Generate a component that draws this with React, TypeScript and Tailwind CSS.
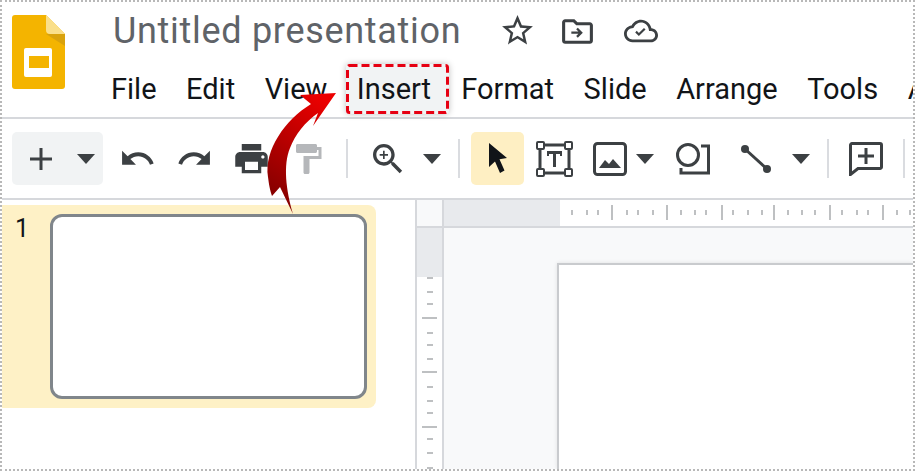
const topTicks = [12, 27, 38, 52, 67, 78, 93, 107, 121, 135, 146, 162, 173, 188, 202, 214, 228, 242, 255, 270, 282, 297, 308, 323, 337, 350];
const topLong = [52, 107, 162, 214, 270, 323];
const sideTicks = [50, 64, 76, 90, 105, 117, 131, 144, 159, 173, 185, 199, 211, 225, 240];
const sideLong = [90, 144, 199];

function Caret() {
  return (
    <svg width="18" height="10" viewBox="0 0 18 10" className="shrink-0">
      <path d="M0 0h18L9 10z" fill="#3c4043" />
    </svg>
  );
}

function Sep({ className }: { className: string }) {
  return <div className={`w-[2px] h-[39px] bg-[#dadce0] shrink-0 ${className}`} />;
}

function Logo() {
  return (
    <svg width="53" height="74" viewBox="0 0 53 74" className="shrink-0">
      <path d="M3 0h31l19 19v52a3 3 0 0 1-3 3H3a3 3 0 0 1-3-3V3a3 3 0 0 1 3-3z" fill="#f4b400" />
      <path d="M34 19l19 12V19z" fill="#d9a20c" />
      <path d="M34 0l19 19H38a4 4 0 0 1-4-4z" fill="#fadf8a" />
      <rect x="12" y="33" width="28" height="29" rx="2" fill="#fff" />
      <rect x="17" y="41" width="20" height="12" fill="#f4b400" />
    </svg>
  );
}

export default function App() {
  const menu = ['File', 'Edit', 'View'];
  const menu2 = ['Format', 'Slide', 'Arrange', 'Tools', 'Add-ons'];
  return (
    <div className="relative w-[915px] h-[471px] overflow-hidden bg-white border-2 border-dotted border-[#b8b8b8] flex flex-col font-['Roboto',sans-serif]">
      <header className="h-[117px] shrink-0 flex pl-[10px] border-b-2 border-[#d6d8dc]">
        <div className="pt-[13px]">
          <Logo />
        </div>
        <div className="ml-[48px] pt-[9px] min-w-0 flex-1">
          <div className="flex items-center h-[40px]">
            <span className="w-[386px] shrink-0 text-[36px] leading-[40px] text-[#5f6368] tracking-[0.7px] whitespace-nowrap">
              Untitled presentation
            </span>
            <svg width="37" height="37" viewBox="0 0 24 24" fill="#3c4043" className="shrink-0 -mt-[2px]">
              <path d="M22 9.24l-7.19-.62L12 2 9.19 8.63 2 9.24l5.46 4.73L5.82 21 12 17.27 18.18 21l-1.63-7.03L22 9.24zM12 15.4l-3.76 2.27 1-4.28-3.32-2.88 4.38-.38L12 6.1l1.71 4.04 4.38.38-3.32 2.88 1 4.28L12 15.4z" />
            </svg>
            <svg width="37" height="37" viewBox="0 0 24 24" fill="#3c4043" className="shrink-0 ml-[23px]">
              <path d="M20 6h-8l-2-2H4c-1.1 0-2 .9-2 2v12c0 1.1.9 2 2 2h16c1.1 0 2-.9 2-2V8c0-1.1-.9-2-2-2zm0 12H4V6h5.17l2 2H20v10z" />
              <path d="M12.2 9.5l-1.06 1.06 1.44 1.44H8v1.5h4.58l-1.44 1.44L12.2 16l3.25-3.25z" />
            </svg>
            <svg width="34" height="34" viewBox="0 0 24 24" fill="#3c4043" className="shrink-0 ml-[28px]">
              <path d="M19.35 10.04C18.67 6.59 15.64 4 12 4 9.11 4 6.6 5.64 5.35 8.04 2.34 8.36 0 10.91 0 14c0 3.31 2.69 6 6 6h13c2.76 0 5-2.24 5-5 0-2.64-2.05-4.78-4.65-4.96zM19 18H6c-2.21 0-4-1.79-4-4 0-2.05 1.53-3.76 3.56-3.97l1.07-.11.5-.95C8.08 7.14 9.94 6 12 6c2.62 0 4.88 1.86 5.39 4.43l.3 1.5 1.53.11c1.56.1 2.78 1.41 2.78 2.96 0 1.65-1.35 3-3 3z" />
              <path d="M10.5 15.6l-2.6-2.6 1.1-1.1 1.5 1.5 3.6-3.6 1.1 1.1z" />
            </svg>
          </div>
          <nav className="mt-[13px] h-[50px] flex items-center gap-[29.5px] text-[29px] leading-[32px] text-[#111418] whitespace-nowrap -ml-[2px]">
            {menu.map((m) => (
              <span key={m}>{m}</span>
            ))}
            <span className="relative -ml-[11px] -mr-[17px] w-[103px] h-[50px] shrink-0 flex items-center pl-[11px] bg-[#f1f3f4] rounded-[3px] shadow-[0_0_6px_rgba(0,0,0,0.25)]">
              Insert
              <svg width="103" height="50" viewBox="0 0 103 50" fill="none" className="absolute left-0 top-0">
                <rect x="1.5" y="1.5" width="100" height="47" rx="2" stroke="#e60012" strokeWidth="3" strokeDasharray="8 4" />
              </svg>
            </span>
            {menu2.map((m) => (
              <span key={m}>{m}</span>
            ))}
          </nav>
        </div>
      </header>

      <div className="h-[81px] shrink-0 flex items-center pl-[10px] border-b-2 border-[#d6d8dc]">
        <div className="w-[91px] h-[53px] shrink-0 flex items-center rounded-[5px] bg-[#f1f3f4] pl-[18px]">
          <svg width="22" height="22" viewBox="0 0 22 22" fill="#3c4043">
            <path d="M9.5 0h3v9.5H22v3h-9.5V22h-3v-9.5H0v-3h9.5z" />
          </svg>
          <div className="ml-[25px]">
            <Caret />
          </div>
        </div>
        <svg width="37" height="37" viewBox="0 0 24 24" fill="#3c4043" className="shrink-0 ml-[16px]">
          <path d="M12.5 8c-2.65 0-5.05.99-6.9 2.6L2 7v9h9l-3.62-3.62c1.39-1.16 3.16-1.88 5.12-1.88 3.54 0 6.55 2.31 7.6 5.5l2.37-.78C21.08 11.03 17.15 8 12.5 8z" />
        </svg>
        <svg width="37" height="37" viewBox="0 0 24 24" fill="#3c4043" className="shrink-0 ml-[20px]">
          <path d="M18.4 10.6C16.55 8.99 14.15 8 11.5 8c-4.65 0-8.58 3.03-9.96 7.22L3.9 16c1.05-3.19 4.05-5.5 7.6-5.5 1.95 0 3.73.72 5.12 1.88L13 16h9V7l-3.6 3.6z" />
        </svg>
        <svg width="39" height="39" viewBox="0 0 24 24" fill="#3c4043" className="shrink-0 ml-[19px]">
          <path d="M19 8H5c-1.66 0-3 1.34-3 3v6h4v4h12v-4h4v-6c0-1.66-1.34-3-3-3zm-3 11H8v-5h8v5zm3-7c-.55 0-1-.45-1-1s.45-1 1-1 1 .45 1 1-.45 1-1 1zm-1-9H6v4h12V3z" />
        </svg>
        <svg width="36" height="36" viewBox="0 0 24 24" fill="#b5b7ba" className="shrink-0 ml-[19px]">
          <path d="M18 4V3c0-.55-.45-1-1-1H5c-.55 0-1 .45-1 1v4c0 .55.45 1 1 1h12c.55 0 1-.45 1-1V6h1v4H9v11c0 .55.45 1 1 1h2c.55 0 1-.45 1-1v-9h8V4h-3z" />
        </svg>
        <Sep className="ml-[20px]" />
        <svg width="40" height="40" viewBox="0 0 24 24" fill="#3c4043" className="shrink-0 ml-[20px]">
          <path d="M15.5 14h-.79l-.28-.27C15.41 12.59 16 11.11 16 9.5 16 5.91 13.09 3 9.5 3S3 5.91 3 9.5 5.91 16 9.5 16c1.61 0 3.09-.59 4.23-1.57l.27.28v.79l5 4.99L20.49 19l-4.99-5zm-6 0C7.01 14 5 11.99 5 9.5S7.01 5 9.5 5 14 7.01 14 9.5 11.99 14 9.5 14z" />
          <path d="M12 10h-2v2H9v-2H7V9h2V7h1v2h2v1z" />
        </svg>
        <div className="ml-[15px]">
          <Caret />
        </div>
        <Sep className="ml-[17px]" />
        <div className="w-[53px] h-[53px] shrink-0 ml-[11px] rounded-[5px] bg-[#feefc3] flex items-center justify-center">
          <svg width="20" height="31" viewBox="0 0 20 31" fill="#111418">
            <path d="M1 0l18 15-7.5 1.2 5 11.3-4.5 2.5-5-11.5L1 24z" />
          </svg>
        </div>
        <svg width="37" height="36" viewBox="0 0 37 36" className="shrink-0 ml-[12px]">
          <rect x="4" y="4" width="29" height="28" fill="none" stroke="#3c4043" strokeWidth="3" />
          <path d="M11 10h15v5h-2v-2h-4v13h-3V13h-4v2h-2z" fill="#3c4043" />
          {[
            [1, 1],
            [29, 1],
            [1, 28],
            [29, 28],
          ].map(([x, y]) => (
            <rect key={`${x}-${y}`} x={x} y={y} width="7" height="7" rx="1" fill="#fff" stroke="#3c4043" strokeWidth="2" />
          ))}
        </svg>
        <svg width="34" height="34" viewBox="0 0 34 34" className="shrink-0 ml-[20px]">
          <rect x="1.5" y="1.5" width="31" height="31" rx="3" fill="none" stroke="#3c4043" strokeWidth="3" />
          <path d="M6 26l6-8 4 4 4-5 8 9z" fill="#3c4043" />
        </svg>
        <div className="ml-[9px]">
          <Caret />
        </div>
        <svg width="34" height="33" viewBox="0 0 34 33" fill="none" stroke="#3c4043" strokeWidth="3" className="shrink-0 ml-[22px]">
          <circle cx="12" cy="13" r="10.5" />
          <path d="M25 4h7.5v27H5v-5" />
        </svg>
        <svg width="30" height="28" viewBox="0 0 30 28" className="shrink-0 ml-[31px]">
          <path d="M4 4l22 20" stroke="#3c4043" strokeWidth="3" />
          <circle cx="4" cy="4" r="4" fill="#3c4043" />
          <circle cx="26" cy="24" r="4" fill="#3c4043" />
        </svg>
        <div className="ml-[21px]">
          <Caret />
        </div>
        <Sep className="ml-[17px]" />
        <svg width="34" height="34" viewBox="0 0 34 34" className="shrink-0 ml-[20px]">
          <path d="M3 1.5h28a1.5 1.5 0 0 1 1.5 1.5v22a1.5 1.5 0 0 1-1.5 1.5H9l-7.5 6V3A1.5 1.5 0 0 1 3 1.5z" fill="none" stroke="#3c4043" strokeWidth="3" />
          <path d="M15.5 6h3v6.5H25v3h-6.5V22h-3v-6.5H9v-3h6.5z" fill="#3c4043" />
        </svg>
        <Sep className="ml-[20px]" />
      </div>

      <div className="flex-1 min-h-0 flex">
        <aside className="w-[415px] shrink-0 pt-[5px] border-r-2 border-[#d6d8dc]">
          <div className="w-[374px] h-[203px] rounded-r-[8px] bg-[#fef1c6] flex pt-[9px] pl-[13px]">
            <span className="w-[35px] shrink-0 mt-[1px] text-[25px] leading-[28px] text-[#111418]">1</span>
            <div className="w-[317px] h-[185px] rounded-[12px] border-[3px] border-[#80868b] bg-white" />
          </div>
        </aside>
        <div className="flex-1 min-w-0 flex flex-col">
          <div className="h-[28px] shrink-0 flex border-b-2 border-[#d6d8dc]">
            <div className="w-[27px] shrink-0 bg-[#f8f9fa] border-r-2 border-[#d6d8dc]" />
            <div className="w-[116px] shrink-0 bg-[#e8eaed]" />
            <svg width="355" height="26" viewBox="0 0 355 26" className="shrink-0">
              {topTicks.map((x) => (
                <line key={x} x1={x} x2={x} y1={topLong.includes(x) ? 5 : 10} y2={topLong.includes(x) ? 20 : 15} stroke="#a9abae" strokeWidth="1.5" />
              ))}
            </svg>
          </div>
          <div className="flex-1 min-h-0 flex">
            <div className="w-[27px] shrink-0 flex flex-col border-r-2 border-[#d6d8dc]">
              <div className="h-[49px] shrink-0 bg-[#e8eaed]" />
              <svg width="25" height="192" viewBox="0 49 25 192" className="shrink-0">
                {sideTicks.map((y) => (
                  <line key={y} y1={y} y2={y} x1={sideLong.includes(y) ? 5 : 10} x2={sideLong.includes(y) ? 20 : 16} stroke="#a9abae" strokeWidth="1.5" />
                ))}
              </svg>
            </div>
            <div className="flex-1 min-w-0 bg-[#f8f9fa] pl-[113px] pt-[35px] flex">
              <div className="flex-1 bg-white border-l-2 border-t-2 border-[#c9cbce] shadow-[0_0_4px_rgba(0,0,0,0.1)]" />
            </div>
          </div>
        </div>
      </div>

      <svg width="915" height="471" viewBox="0 0 915 471" className="absolute -left-[2px] -top-[2px] pointer-events-none">
        <defs>
          <linearGradient id="arrowFill" x1="0.7" y1="0" x2="0.3" y2="1">
            <stop offset="0" stopColor="#ec0000" />
            <stop offset="1" stopColor="#800000" />
          </linearGradient>
        </defs>
        <path
          d="M336 93L300 95L311 104C285 120 264 150 268 177C269 185 270 190 272 196L280 187L293 214C286 190 283 165 290 148C295 135 305 122 318 113L313 126Z"
          fill="url(#arrowFill)"
        />
      </svg>
    </div>
  );
}
